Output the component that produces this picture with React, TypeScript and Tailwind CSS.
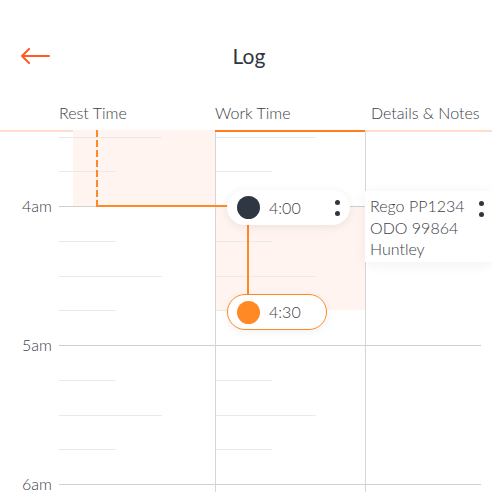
import React from "react";

type SlotKind = "hour" | "long" | "short";

const slots: { kind: SlotKind; label?: string }[] = [
  { kind: "long" },
  { kind: "short" },
  { kind: "hour", label: "4am" },
  { kind: "short" },
  { kind: "long" },
  { kind: "short" },
  { kind: "hour", label: "5am" },
  { kind: "short" },
  { kind: "long" },
  { kind: "short" },
  { kind: "hour", label: "6am" },
];

function Kebab() {
  return (
    <div className="flex flex-col gap-[6px]">
      <span className="block w-[5px] h-[5px] rounded-full bg-[#2f3640]" />
      <span className="block w-[5px] h-[5px] rounded-full bg-[#2f3640]" />
    </div>
  );
}

function SlotRow({ kind, label }: { kind: SlotKind; label?: string }) {
  const restW = kind === "long" ? "w-[103px]" : kind === "short" ? "w-[57px]" : "w-full";
  const workW = kind === "long" ? "w-[100px]" : kind === "short" ? "w-[56px]" : "w-full";
  const lineColor = kind === "hour" ? "bg-[#d0d0d0]" : "bg-[#eaeaea]";
  return (
    <div className="grid grid-cols-[59px_156px_150px_127px] h-[34.75px]">
      <div>
        {label && (
          <span className="block -translate-y-1/2 pr-[7px] text-right text-[16px] leading-[18px] text-[#3b4048]">
            {label}
          </span>
        )}
      </div>
      <div>
        <div className={`h-px ${restW} ${lineColor}`} />
      </div>
      <div className="border-l border-[#d6d6d6]">
        <div className={`h-px ${workW} ${lineColor}`} />
      </div>
      <div className="border-l border-[#d6d6d6]">
        {kind === "hour" && <div className={`h-px mr-[11px] ${lineColor}`} />}
      </div>
    </div>
  );
}

export default function App() {
  return (
    <div className="w-[492px] h-[492px] overflow-hidden bg-white font-['Lato',sans-serif] font-light text-[#3b4048]">

      {/* Header */}
      <header className="grid grid-cols-[1fr_auto_1fr] items-center h-[48px] mt-[32px] px-5">
        <svg width="30" height="16" viewBox="0 0 30 16" fill="none" className="text-[#ff5b24]">
          <path d="M29 8H2M9 1L2 8l7 7" stroke="currentColor" strokeWidth="2" strokeLinecap="round" strokeLinejoin="round" />
        </svg>
        <h1 className="ml-[6px] text-[21px] font-normal text-[#2f3640]">Log</h1>
        <div />
      </header>

      {/* Tabs */}
      <nav className="grid grid-cols-[59px_156px_150px_127px] h-[52px] items-end border-b-2 border-[#ffdccb]">
        <div />
        <div className="pb-[7px] text-[16px] leading-[20px]">Rest Time</div>
        <div className="relative pb-[7px] text-[16px] leading-[20px]">
          Work Time
          <span className="absolute left-[-2px] right-0 bottom-[-2px] h-[2px] bg-[#ff7d1e]" />
        </div>
        <div className="pb-[7px] pl-[6px] text-[16px] leading-[20px] whitespace-nowrap">Details &amp; Notes</div>
      </nav>

      {/* Timeline */}
      <main className="relative">
        {/* shaded periods */}
        <div className="absolute left-[73px] top-[-2px] w-[142px] h-[76px] bg-[#fff4f0]" />
        <div className="absolute left-[216px] top-[74px] w-[149px] h-[104px] bg-[#fff4f0]" />

        {/* grid */}
        <div className="relative">
          <div className="grid grid-cols-[59px_156px_150px_127px] h-[4.5px]">
            <div />
            <div />
            <div className="border-l border-[#d6d6d6]" />
            <div className="border-l border-[#d6d6d6]" />
          </div>
          {slots.map((s, i) => (
            <SlotRow key={i} kind={s.kind} label={s.label} />
          ))}
        </div>

        {/* connectors */}
        <svg className="absolute left-[96px] top-[-2px]" width="2" height="76">
          <line x1="1" y1="0" x2="1" y2="76" stroke="#ff8a25" strokeWidth="2" strokeDasharray="7 3" />
        </svg>
        <div className="absolute left-[96px] top-[73px] w-[132px] h-[2px] bg-[#ff8a25]" />
        <div className="absolute left-[247px] top-[92px] w-[2px] h-[72px] bg-[#ff8a25]" />

        {/* 4:00 entry */}
        <div className="absolute left-[227px] top-[58px] w-[123px] h-[35px] rounded-full bg-white shadow-[0_2px_10px_rgba(0,0,0,0.08)] flex items-center pl-[10px] pr-[10px]">
          <span className="w-[23px] h-[23px] rounded-full bg-[#2f3742]" />
          <span className="ml-[9px] text-[16px] text-[#3b4048]">4:00</span>
          <span className="ml-auto"><Kebab /></span>
        </div>

        {/* 4:30 entry */}
        <div className="absolute left-[227px] top-[162px] w-[100px] h-[36px] rounded-full bg-white border-[1.5px] border-[#ff8a25] shadow-[0_2px_10px_rgba(0,0,0,0.06)] flex items-center pl-[9px]">
          <span className="w-[23px] h-[23px] rounded-full bg-[#ff8a25]" />
          <span className="ml-[9px] text-[16px] text-[#3b4048]">4:30</span>
        </div>

        {/* details card */}
        <div className="absolute left-[365px] top-[59px] w-[127px] h-[71px] bg-white shadow-[0_2px_14px_rgba(0,0,0,0.06)] flex pl-[5px] pt-[4px] pr-[8px]">
          <div className="text-[16px] leading-[21.5px] text-[#3b4048] whitespace-nowrap">
            <div>Rego PP1234</div>
            <div>ODO 99864</div>
            <div>Huntley</div>
          </div>
          <span className="ml-auto mt-[6px]"><Kebab /></span>
        </div>
      </main>
    </div>
  );
}
